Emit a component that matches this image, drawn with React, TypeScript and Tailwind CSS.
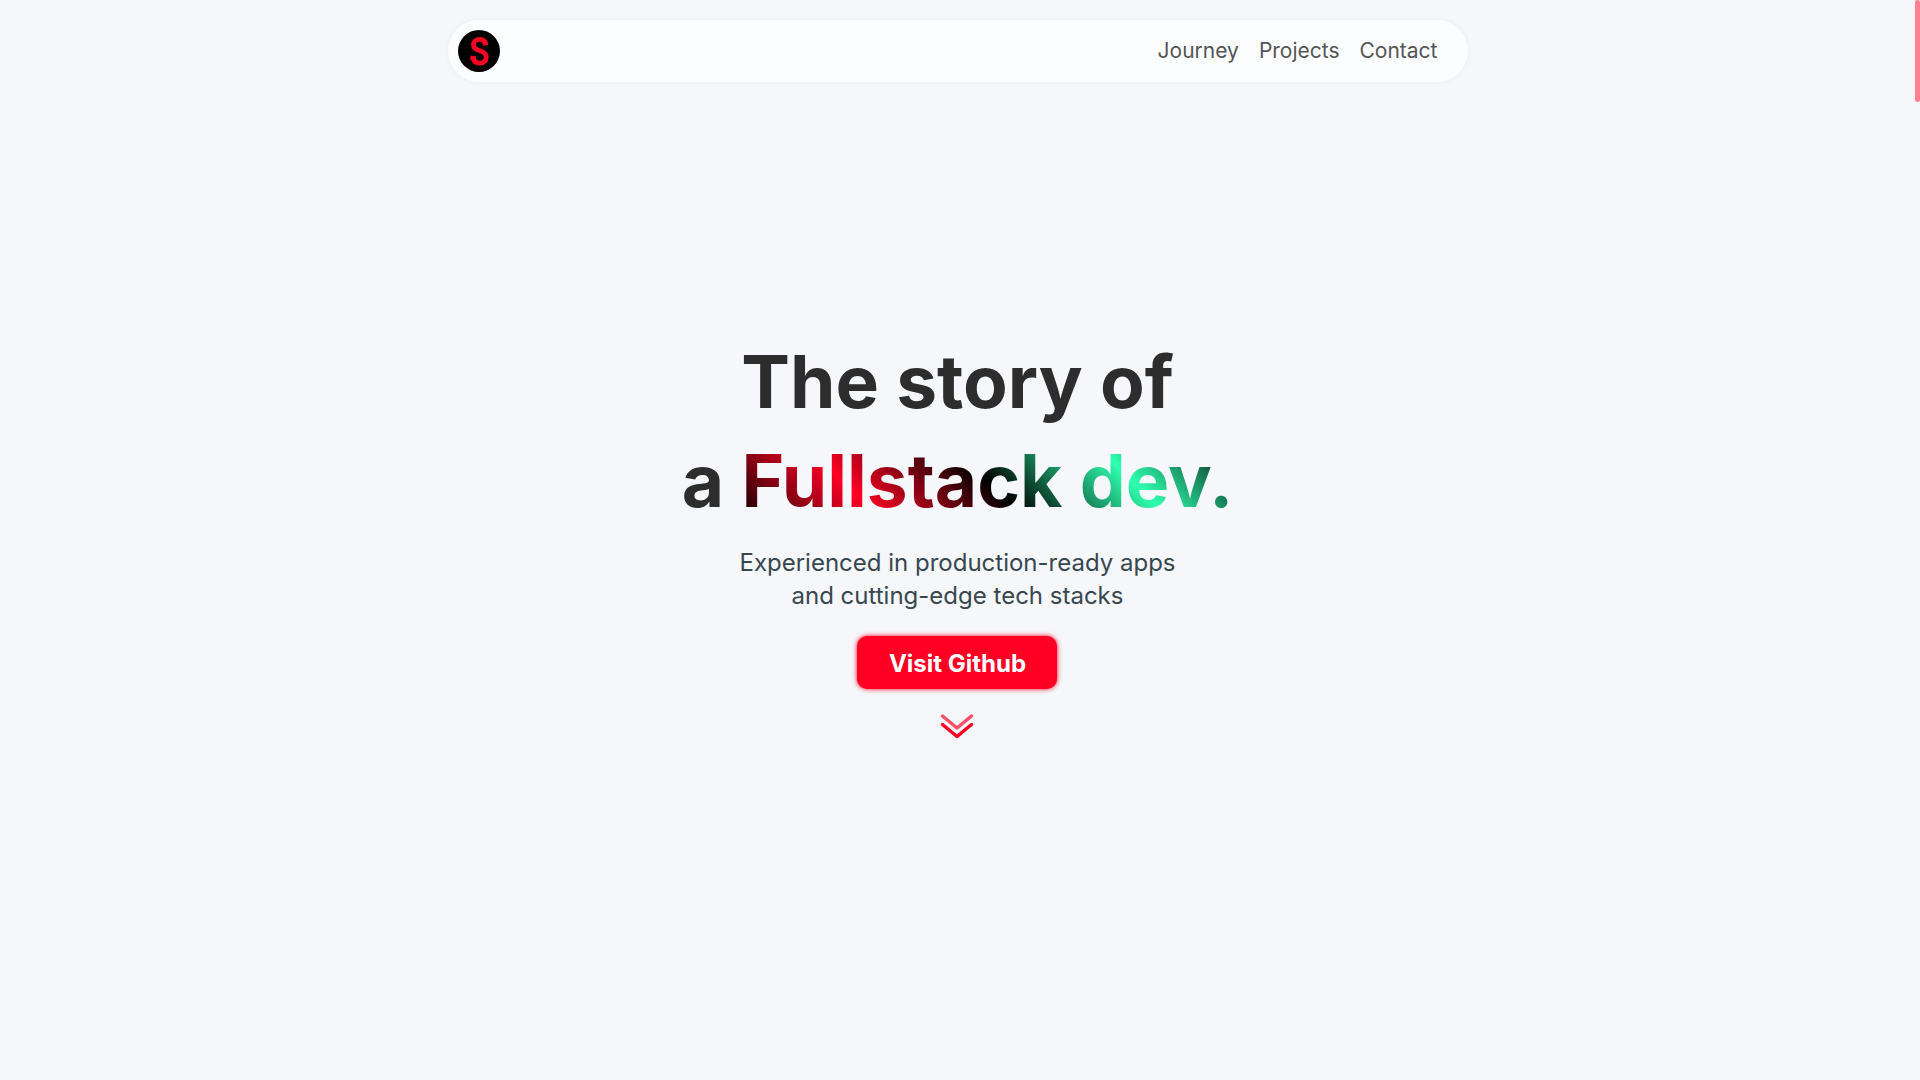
const links = ["Journey", "Projects", "Contact"];

function Logo() {
  return (
    <svg viewBox="0 0 42 42" className="size-[42px]" role="img" aria-label="Home">
      <circle cx="21" cy="21" r="21" fill="#000" />
      <path
        d="M27.500 14.500C27 11 25 9.300 22 9.300c-3.800 0-6.500 2.100-6.500 5.600 0 3.200 2.200 4.400 6 5.700 4.600 1.600 6.700 3.100 6.700 6.600 0 3.700-2.600 6-6.200 6-3.700 0-6.300-2-6.800-5.500"
        fill="none"
        stroke="#ff0024"
        strokeWidth="4.800"
      />
      <path d="M24.500 12.500l4.500-2.200 1.300 4.200-5 1.500zM12.800 25l1.500 1.200 3.300-.2.600 4.500-5 .300-1.200-2z" fill="#ff0024" />
    </svg>
  );
}

export default function App() {
  return (
    <div className="flex min-h-screen bg-[#f5f7fb] font-['Inter',sans-serif]">
      <div className="flex min-w-0 flex-1 flex-col items-center">
        <header className="mt-5 flex h-[62px] w-full max-w-[1020px] items-center justify-between rounded-full bg-[#fcfdff] pr-[30px] pl-2.5 shadow-[0_0_6px_rgba(0,0,0,0.05)]">
          <a href="#home">
            <Logo />
          </a>
          <nav className="flex gap-5 text-[21px] text-[#555]">
            {links.map((label) => (
              <a key={label} href={`#${label.toLowerCase()}`}>
                {label}
              </a>
            ))}
          </nav>
        </header>
        <main className="flex flex-1 flex-col items-center justify-center pb-[91px] text-center">
          <h1 className="text-[73px] leading-[99px] font-bold text-[#2d2d2d]">
            The story of
            <br />a{" "}
            <span className="bg-[linear-gradient(45deg,#000_0%,#ff0024_25%,#000_50%,#2fffaf_75%,#000_100%)] bg-clip-text text-transparent">
              Fullstack dev.
            </span>
          </h1>
          <p className="mt-4 text-2xl leading-[33px] text-[#37474f]">
            Experienced in production-ready apps
            <br />
            and cutting-edge tech stacks
          </p>
          <button
            type="button"
            className="mt-6 h-[53px] w-[200px] rounded-[10px] bg-[#ff0024] pt-0.5 text-2xl font-bold text-white shadow-[0_0_5px_#ff0024]"
          >
            Visit Github
          </button>
          <svg viewBox="0 0 34 26" className="mt-6 h-[26px] w-[34px]" fill="none" strokeWidth="3.500" strokeLinecap="round" strokeLinejoin="round" aria-hidden="true">
            <path d="M2.500 3L17 15L31.500 3" stroke="#ff5069" />
            <path d="M2.500 11.500L17 23.500L31.500 11.500" stroke="#ff0024" />
          </svg>
        </main>
      </div>
      <div className="w-[5px]" aria-hidden="true">
        <div className="h-[102px] rounded-full bg-[#ff808e]" />
      </div>
    </div>
  );
}
